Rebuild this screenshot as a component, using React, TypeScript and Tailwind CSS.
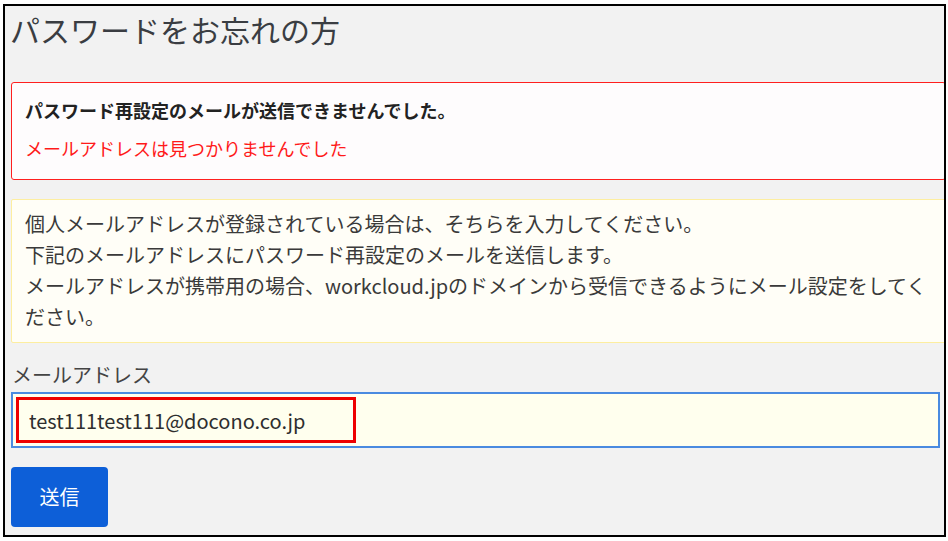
import React from 'react';

export default function App() {
  return (
    <div className="min-h-screen bg-white pl-[3px] pt-[4px] font-['Noto_Sans_CJK_JP',sans-serif]">
      <div className="flex h-[533px] w-[943px] flex-col overflow-hidden border-2 border-black bg-[#f2f2f2] pl-[6px] pr-[4px] pt-[8px]">
        <h1 className="-ml-px text-[30px] leading-[30px] font-normal text-[#3a3d42]">
          パスワードをお忘れの方
        </h1>

        {/* error alert */}
        <div className="-mr-[6px] mt-[38px] rounded-[3px] border border-[#ff1f1f] bg-[#fefcfd] pb-[19px] pl-[13px] pt-[15px]">
          <p className="text-[18px] leading-[24px] font-bold text-[#222]">
            パスワード再設定のメールが送信できませんでした。
          </p>
          <p className="mt-[14px] text-[18px] leading-[24px] text-[#ff1a1a]">
            メールアドレスは見つかりませんでした
          </p>
        </div>

        {/* notice */}
        <div className="-mr-[8px] mt-[19px] rounded-[2px] border border-[#fdeea0] bg-[#fffef7] pb-[10px] pl-[13px] pt-[8px] text-[20px] leading-[31px] text-[#3a3a3a]">
          個人メールアドレスが登録されている場合は、そちらを入力してください。
          <br />
          下記のメールアドレスにパスワード再設定のメールを送信します。
          <br />
          メールアドレスが携帯用の場合、workcloud.jpのドメインから受信できるようにメール設定をしてく
          <br />
          ださい。
        </div>

        <label className="mt-[20px] pl-px text-[20px] leading-[24px] text-[#444]">メールアドレス</label>

        <div className="relative mt-[5px]">
          <input
            readOnly
            defaultValue="test111test111@docono.co.jp"
            className="block h-[56px] w-full border-2 border-[#4a8be0] bg-[#ffffee] pl-[16px] text-[20px] text-[#2e2e2e] outline-none"
          />
          <div className="pointer-events-none absolute left-[5px] top-[5px] h-[46px] w-[340px] border-[3px] border-[#ee0000]" />
        </div>

        <button className="mt-[19px] h-[60px] w-[97px] rounded-[4px] bg-[#0d5fd8] text-[20px] text-white">
          送信
        </button>
      </div>
    </div>
  );
}
